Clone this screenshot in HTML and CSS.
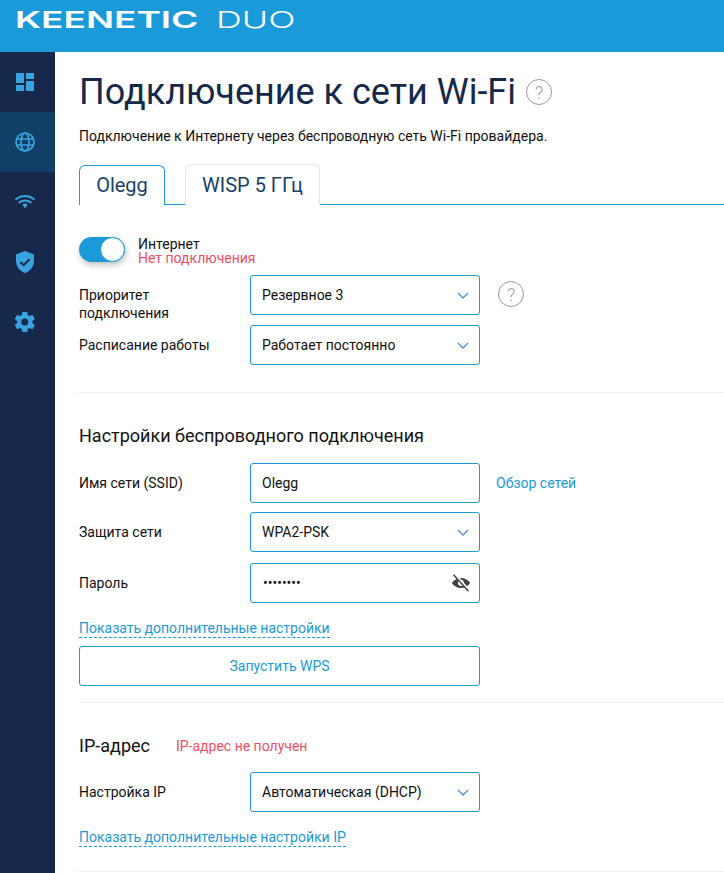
FILE: index.html
```html
<!DOCTYPE html>
<html lang="ru">
<head>
<meta charset="utf-8">
<title>Подключение к сети Wi-Fi</title>
<link rel="stylesheet" href="styles.css">
</head>
<body>
<header class="topbar">
  <div class="logo"><span class="logo-main">KEENETIC</span><span class="logo-model">DUO</span></div>
</header>
<div class="layout">
  <nav class="sidebar">
    <div class="nav-item">
      <svg class="nav-icon icon-dash" viewBox="0 0 18 18"><path d="M0 0h8v10H0zM0 12h8v6H0zM10 0h8v6h-8zM10 8h8v10h-8z"/></svg>
    </div>
    <div class="nav-item active">
      <svg class="nav-icon" viewBox="0 0 20 20"><g fill="none" stroke="#38a3de" stroke-width="1.7"><circle cx="10" cy="10" r="9"/><ellipse cx="10" cy="10" rx="4" ry="9"/><path d="M1.500 7h17M1.500 13h17"/></g></svg>
    </div>
    <div class="nav-item">
      <svg class="nav-icon" viewBox="0 0 20 20"><g fill="none" stroke="#38a3de" stroke-width="1.800" stroke-linecap="round"><path d="M1 7.200c5.200-4.300 12.800-4.300 18 0"/><path d="M4.200 10.500c3.400-2.700 8.200-2.700 11.600 0"/></g><path d="M10 11.500c1 0 1.900.3 2.600.9L10 16.500l-2.600-4.100c.7-.6 1.600-.9 2.600-.9z"/></svg>
    </div>
    <div class="nav-item">
      <svg class="nav-icon icon-shield" viewBox="0 0 18 22"><path d="M9 0l9 3.500V10c0 5.500-3.800 10.200-9 12C3.800 20.200 0 15.500 0 10V3.500z"/><path d="M4.500 11.200l3.200 3 5.800-6" fill="none" stroke="#16294a" stroke-width="2"/></svg>
    </div>
    <div class="nav-item">
      <svg class="nav-icon icon-gear" viewBox="2 2 20 20"><path d="M19.400 13c.04-.33.060-.66.060-1s-.02-.67-.07-1l2.160-1.680c.2-.15.25-.43.130-.66l-2.050-3.540c-.12-.23-.39-.3-.62-.23l-2.550 1.030c-.53-.4-1.100-.74-1.730-1l-.39-2.710A.5.500 0 0 0 13.830 1.800H9.730c-.25 0-.46.180-.5.420l-.39 2.710c-.62.260-1.200.6-1.730 1L4.560 4.900c-.23-.09-.5 0-.62.230L1.890 8.660c-.13.230-.07.510.13.660L4.180 11c-.05.330-.8.670-.08 1s.3.670.08 1l-2.160 1.680c-.2.150-.26.430-.13.660l2.050 3.540c.12.230.39.300.62.230l2.550-1.030c.53.400 1.110.740 1.730 1l.39 2.710c.04.240.25.420.5.420h4.100c.25 0 .46-.18.500-.42l.39-2.710c.63-.26 1.200-.6 1.730-1l2.550 1.030c.23.090.5 0 .62-.23l2.050-3.540c.12-.23.07-.51-.13-.66zM11.780 15.500a3.500 3.500 0 1 1 0-7 3.500 3.500 0 0 1 0 7z"/></svg>
    </div>
  </nav>
  <main class="content">
    <div class="title-row">
      <h1 class="title">Подключение к сети Wi-Fi</h1>
      <span class="help help-large">?</span>
    </div>
    <p class="intro">Подключение к Интернету через беспроводную сеть Wi-Fi провайдера.</p>
    <div class="tabs">
      <div class="tab tab-active">Olegg</div>
      <div class="tab">WISP 5 ГГц</div>
    </div>
    <section class="section section-first">
      <div class="toggle-row">
        <span class="toggle"><span class="knob"></span></span>
        <div class="toggle-text">
          <div class="toggle-label">Интернет</div>
          <div class="error">Нет подключения</div>
        </div>
      </div>
      <div class="row row-priority">
        <label class="label label-multi">Приоритет<br>подключения</label>
        <div class="control select">Резервное 3<svg class="chevron" viewBox="0 0 12 7"><path d="M1 1l5 5 5-5"/></svg></div>
        <span class="help help-small">?</span>
      </div>
      <div class="row row-schedule">
        <label class="label">Расписание работы</label>
        <div class="control select">Работает постоянно<svg class="chevron" viewBox="0 0 12 7"><path d="M1 1l5 5 5-5"/></svg></div>
      </div>
    </section>
    <hr class="divider divider-one">
    <section class="section">
      <h2 class="heading heading-wireless">Настройки беспроводного подключения</h2>
      <div class="row">
        <label class="label">Имя сети (SSID)</label>
        <div class="control">Olegg</div>
        <a class="plain-link">Обзор сетей</a>
      </div>
      <div class="row row-security">
        <label class="label">Защита сети</label>
        <div class="control select">WPA2-PSK<svg class="chevron" viewBox="0 0 12 7"><path d="M1 1l5 5 5-5"/></svg></div>
      </div>
      <div class="row row-password">
        <label class="label">Пароль</label>
        <div class="control password"><span class="dots">••••••••</span>
          <svg class="eye" viewBox="0 0 24 24"><path d="M12 6c-4.800 0-8.900 2.500-11 6 2.100 3.500 6.200 6 11 6s8.900-2.500 11-6c-2.100-3.500-6.200-6-11-6zm0 9.500a3.500 3.500 0 1 1 0-7 3.500 3.500 0 0 1 0 7z"/><path d="M4 1.500l18 20" fill="none" stroke="#fff" stroke-width="3.500"/><path d="M3 2l18 20" fill="none" stroke="#444" stroke-width="1.800"/></svg>
        </div>
      </div>
      <a class="dash-link link-settings">Показать дополнительные настройки</a>
      <button class="wps" type="button">Запустить WPS</button>
    </section>
    <hr class="divider divider-two">
    <section class="section">
      <div class="ip-head">
        <h2 class="heading">IP-адрес</h2>
        <span class="error ip-error">IP-адрес не получен</span>
      </div>
      <div class="row row-ip">
        <label class="label">Настройка IP</label>
        <div class="control select">Автоматическая (DHCP)<svg class="chevron" viewBox="0 0 12 7"><path d="M1 1l5 5 5-5"/></svg></div>
      </div>
      <a class="dash-link link-ip">Показать дополнительные настройки IP</a>
    </section>
    <hr class="divider divider-three">
  </main>
</div>
</body>
</html>
```

FILE: styles.css
```css
* { box-sizing: border-box; }
html, body { margin: 0; height: 873px; overflow: hidden; }
body { background: #fff; font-family: Roboto, "Liberation Sans", sans-serif; font-size: 14px; color: #111; }

.topbar { height: 52px; background: #1a9ad9; padding-left: 15px; padding-top: 10px; overflow: hidden; }
.logo { display: flex; align-items: center; height: 21px; color: #fff; font-family: Inter, "Liberation Sans", sans-serif; line-height: 21px; }
.logo-main { font-size: 23px; font-weight: 600; width: 184px; white-space: nowrap; transform: scaleX(1.61); transform-origin: left center; }
.logo-model { font-size: 23px; font-weight: 300; margin-left: 17px; transform: scaleX(1.56); transform-origin: left center; }

.layout { display: flex; height: 821px; }
.sidebar { width: 55px; flex: none; background: #16294a; }
.nav-item { height: 60px; padding-right: 5px; display: flex; align-items: center; justify-content: center; }
.nav-item.active { background: #123f68; }
.nav-icon { width: 20px; height: 20px; fill: #38a3de; }
.icon-dash { width: 18px; height: 18px; }
.icon-shield { width: 18px; height: 22px; }

.content { flex: 1; min-width: 0; padding-left: 24px; }
.title-row { display: flex; align-items: center; height: 40px; margin-top: 20px; }
.title { margin: 0; font-size: 36px; line-height: 40px; font-weight: 400; color: #16294a; white-space: nowrap; }
.help { display: flex; align-items: center; justify-content: center; border: 1px solid #9a9a9a; border-radius: 50%; color: #9a9a9a; width: 26px; height: 26px; font-size: 18px; font-weight: 300; flex: none; }
.help-large { margin-left: 10px; }
.help-small { margin-left: 18px; margin-top: -2px; }
.intro { margin: 15px 0 0; font-size: 14px; line-height: 18px; color: #111; white-space: nowrap; }

.tabs { display: flex; gap: 20px; margin-top: 19px; height: 41px; border-bottom: 1px solid #1a9ad9; align-items: flex-end; }
.tab { height: 41px; padding: 0 16px; margin-bottom: -1px; border: 1px solid #dfe3ea; border-bottom: 0; border-radius: 6px 6px 0 0; background: #fff; font-size: 20px; line-height: 40px; color: #1a4168; }
.tab-active { height: 40px; width: 86px; border-color: #1a9ad9; text-align: center; padding: 0; line-height: 39px; position: relative; }

.section-first { padding-top: 32px; }
.toggle-row { display: flex; align-items: flex-start; height: 27px; }
.toggle { display: block; width: 46px; height: 25px; border-radius: 13px; background: #1a9ad9; position: relative; flex: none; box-shadow: 1px 3px 6px rgba(0,0,0,.25); }
.knob { position: absolute; right: 0; top: 0; width: 25px; height: 25px; border-radius: 50%; background: #fff; border: 1px solid #1a9ad9; }
.toggle-text { margin-left: 13px; line-height: 14px; margin-top: 0; }
.toggle-label { font-size: 14px; line-height: 14px; color: #111; }
.error { color: #ee4f62; font-size: 14px; line-height: 14px; }

.row { display: flex; align-items: center; height: 40px; }
.label { width: 171px; flex: none; font-size: 14px; line-height: 18px; color: #111; }
.label-multi { margin-top: 18px; }
.control { width: 230px; height: 40px; flex: none; border: 1px solid #1a9ad9; border-radius: 3px; padding: 0 11px; line-height: 38px; font-size: 14px; color: #111; position: relative; }
.chevron { position: absolute; right: 10px; top: 16px; width: 12px; height: 7px; fill: none; stroke: #4a90d0; stroke-width: 1.300; }
.row-priority { margin-top: 11px; }
.row-schedule { margin-top: 10px; }
.row-security { margin-top: 9px; }
.row-password { margin-top: 11px; }
.row-ip { margin-top: 14px; }
.plain-link { margin-left: 16px; color: #1a9ad9; font-size: 14px; }
.dots { font-size: 14px; margin-left: 1px; color: #111; }
.eye { position: absolute; right: 8px; top: 9px; width: 20px; height: 20px; fill: #444; }

.divider { border: 0; border-top: 1px solid #ececec; margin: 0; }
.divider-one { margin-top: 27px; }
.divider-two { margin-top: 16px; }
.divider-three { margin-top: 24px; }

.heading { margin: 0; font-size: 18px; line-height: 24px; font-weight: 400; color: #111; }
.heading-wireless { margin-top: 31px; margin-bottom: 15px; }
.dash-link { display: block; width: fit-content; color: #1a9ad9; font-size: 14px; line-height: 17px; border-bottom: 1px dashed #1a9ad9; }
.link-settings { margin-top: 17px; }
.link-ip { margin-top: 17px; }
.wps { display: block; width: 401px; height: 40px; margin-top: 8px; background: #fff; border: 1px solid #1a9ad9; border-radius: 3px; color: #1a9ad9; font: inherit; }

.ip-head { display: flex; align-items: center; margin-top: 31px; height: 24px; }
.ip-error { margin-left: 26px; }
```
